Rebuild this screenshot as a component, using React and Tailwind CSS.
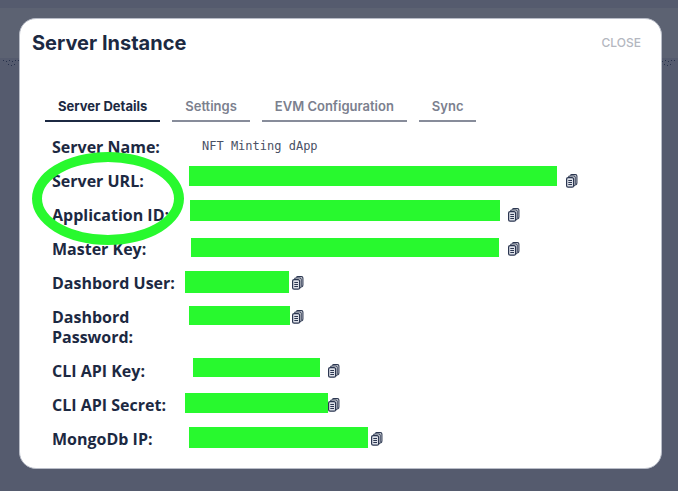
import React from "react";

const tabs = ["Server Details", "Settings", "EVM Configuration", "Sync"];

const fields = [
  { label: "Server URL:", value: "w-[364px]", mask: "left-[2px] top-[-5px] w-[368px] h-[20px]" },
  { label: "Application ID:", value: "w-[306px]", mask: "left-[3px] top-[-5px] w-[310px] h-[21px]" },
  { label: "Master Key:", value: "w-[306px]", mask: "left-[4px] top-[-1px] w-[308px] h-[19px]" },
  { label: "Dashbord User:", value: "w-[90px]", mask: "left-[-2px] top-[-2px] w-[104px] h-[22px]" },
  { label: "Dashbord Password:", value: "w-[90px]", mask: "left-[2px] top-[-1px] w-[101px] h-[19px]" },
  { label: "CLI API Key:", value: "w-[126px]", mask: "left-[6px] top-[-3px] w-[127px] h-[19px]" },
  { label: "CLI API Secret:", value: "w-[126px]", mask: "left-[-2px] top-[-2px] w-[143px] h-[20px]" },
  { label: "MongoDb IP:", value: "w-[169px]", mask: "left-[2px] top-[-2px] w-[179px] h-[21px]" },
];

function CopyIcon() {
  return (
    <svg className="block h-[14px] w-[12px]" viewBox="0 0 12 14" fill="none" stroke="#2b3650" aria-hidden="true">
      <path d="M4.5 1.6Q4.7.6 5.7.6H9.4Q10.9.6 10.9 2.1V9Q10.9 10.3 9.8 10.8" strokeWidth="1.1" />
      <path d="M2.6 3Q2.8 2 3.8 2H7.9Q9.2 2 9.2 3.3V10.3Q9.2 11.6 8.2 11.9" strokeWidth="1.1" />
      <rect x="0.6" y="3.6" width="7" height="9.6" rx="1.5" fill="#dde0e8" strokeWidth="1.2" />
      <path d="M2.3 6.5H6M2.3 8.5H6M2.3 10.5H6" strokeWidth="1" />
    </svg>
  );
}

function Specks() {
  return (
    <svg className="h-[6px] w-[16px]" viewBox="0 0 16 6" fill="#26304a" aria-hidden="true">
      <path d="M0 0h1v1H0zM3 1h1v1H3zM6 0h1v1H6zM9 1h1v1H9zM12 0h1v1h-1zM15 0h1v1h-1zM5 4h1v1H5zM8 5h1v1H8zM11 4h1v1h-1z" />
    </svg>
  );
}

export default function App() {
  return (
    <div className="min-h-screen border-r-2 border-b border-white bg-[#555b6e] font-['Inter',sans-serif] text-[#1c2942]">
      <div className="relative">
        <div className="absolute inset-x-0 top-2 h-[50px] bg-[#5c6272]" />
        <div className="absolute inset-x-0 top-[60px] flex justify-between px-[3px]">
          <Specks />
          <Specks />
        </div>
        <div className="relative pt-[18px] pr-4 pb-5 pl-[19px]">
          <section className="rounded-[17px] border border-[#b9bdc8] bg-white px-3 pt-3 pb-3" role="dialog" aria-labelledby="title">
            <header className="flex h-6 items-center justify-between pr-2">
              <h1 id="title" className="text-[20px] leading-6 font-bold">Server Instance</h1>
              <button type="button" className="text-[12px] leading-6 font-medium text-[#b4b7bf]">CLOSE</button>
            </header>
            <div role="tablist" className="mt-[41px] ml-[13px] flex gap-3">
              {tabs.map((tab, i) => (
                <button
                  key={tab}
                  type="button"
                  role="tab"
                  aria-selected={i === 0}
                  className={
                    i === 0
                      ? "border-b-2 border-[#1c2942] px-[13px] pb-1 text-[13px] leading-5 font-bold"
                      : "border-b-2 border-[#878c9a] px-[13px] pb-1 text-[13px] leading-5 font-semibold text-[#7b808e]"
                  }
                >
                  {tab}
                </button>
              ))}
            </div>
            <div className="relative mt-2 pl-5">
              <dl>
                <div className="flex py-[7px]">
                  <dt className="w-[135px] shrink-0 font-['Open_Sans',sans-serif] text-[16px] leading-5 font-bold">Server Name:</dt>
                  <dd className="pl-[15px] font-['DejaVu_Sans_Mono',monospace] text-[12px] leading-[18px] text-[#4a5165]">NFT Minting dApp</dd>
                </div>
                {fields.map((f) => (
                  <div key={f.label} className="flex py-[7px]">
                    <dt className="w-[135px] shrink-0 font-['Open_Sans',sans-serif] text-[16px] leading-5 font-bold">{f.label}</dt>
                    <dd className="relative flex h-5 items-center pl-[15px]">
                      <span className={f.value} />
                      <span className={"absolute bg-[#28f92e] " + f.mask} />
                      <button type="button" aria-label={"Copy " + f.label} className="relative">
                        <CopyIcon />
                      </button>
                    </dd>
                  </div>
                ))}
              </dl>
              <div className="absolute top-[22px] left-0 h-[93px] w-[152px] rounded-[50%] border-10 border-[#28f92e]" />
            </div>
          </section>
        </div>
      </div>
    </div>
  );
}
